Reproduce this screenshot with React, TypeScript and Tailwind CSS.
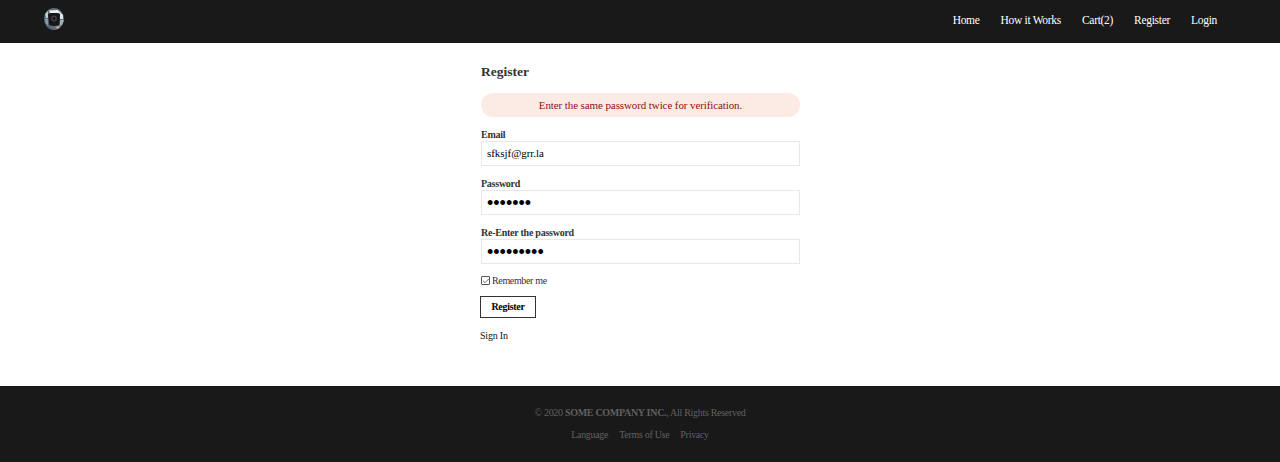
import { Check } from "lucide-react";

const navItems = ["Home", "How it Works", "Cart(2)", "Register", "Login"];

// small round product logo, scrappy mosaic like the source bitmap
const Logo = () => (
  <svg width="20" height="22" viewBox="0 0 20 22" aria-label="logo" className="mb-[5px]">
    <ellipse cx="10" cy="11" rx="10" ry="11" fill="#5f6e78" />
    <path d="M1 6 L4 3 L4 10 L2 10 Z" fill="#b8ccd6" />
    <path d="M1 11 L4 11 L4 17 L2 16 Z" fill="#7f9fb3" />
    <path d="M15 3 L19 7 L19 11 L16 11 Z" fill="#dfe6e9" />
    <path d="M16 12 L20 12 L18 17 L15 18 Z" fill="#9fb0b8" />
    <path d="M3 17 L7 20 L11 22 L5 20 Z" fill="#35617f" />
    <path d="M11 19 L16 18 L14 21 Z" fill="#c8b090" />
    <path d="M4 6 Q10 3 16 6 L15.5 17 Q10 19 5 17 Z" fill="#17171a" />
    <path d="M5 2.5 L14 2 L16 5 L6 5 Z" fill="#eef1f2" />
    <circle cx="10" cy="10.5" r="3" fill="#383d42" />
    <circle cx="10" cy="10.5" r="1.2" fill="#0a0a0a" />
  </svg>
);

const Field = ({ label, type, value }: { label: string; type: string; value: string }) => (
  <div className="mb-[12px]">
    <label className="block text-[10px] font-bold leading-[12px] tracking-[-0.25px] text-[#333]">{label}</label>
    <input
      readOnly
      type={type}
      value={value}
      className={
        type === "password"
          ? "block h-[25px] w-full border border-[#e8e8e8] bg-white px-[5px] pt-[2px] font-['Liberation_Sans',sans-serif] text-[18px] text-black outline-none"
          : "block h-[25px] w-full border border-[#e8e8e8] bg-white px-[5px] text-[11px] tracking-[-0.05px] text-black outline-none"
      }
    />
  </div>
);

export default function App() {
  return (
    <div className="flex min-h-[462px] flex-col bg-white font-['Liberation_Serif',serif]">
      <header className="flex h-[43px] items-center justify-between bg-[#191919] pl-[44px] pr-[63px]">
        <Logo />
        <nav className="flex gap-[21px] pb-[2px] text-[11.5px] tracking-[-0.3px] text-white">
          {navItems.map((item) => (
            <a key={item}>{item}</a>
          ))}
        </nav>
      </header>

      <main className="mx-auto flex h-[343px] w-[320px] flex-col pt-[21px]">
        <div className="pl-[1px]">
          <h1 className="text-[13.5px] font-bold leading-[16px] text-[#333]">Register</h1>
          <div className="mt-[13px] mb-[12px] flex h-[23.5px] items-center justify-center rounded-full bg-[#fcebe5] text-[11px] tracking-[-0.1px] text-[#8f1010]">
            Enter the same password twice for verification.
          </div>
          <Field label="Email" type="text" value="sfksjf@grr.la" />
          <Field label="Password" type="password" value="1234567" />
          <Field label="Re-Enter the password" type="password" value="123456789" />
          <label className="-mt-[1px] flex h-[12px] items-center gap-[2px] text-[10px] tracking-[-0.35px] text-[#333]">
            <span className="mb-[1px] grid h-[9px] w-[9px] place-items-center rounded-[1px] border border-[#555]">
              <Check className="h-[8px] w-[8px] text-[#333]" strokeWidth={2.25} />
            </span>
            Remember me
          </label>
        </div>
        <button className="mt-[9px] h-[22.5px] w-[56px] border border-[#333] bg-white text-[10px] font-bold tracking-[-0.3px] text-black">
          Register
        </button>
        <a className="mt-[11.5px] text-[10px] leading-[12px] tracking-[-0.2px] text-[#111]">Sign In</a>
      </main>

      <footer className="flex h-[76px] flex-col items-center bg-[#191919] pt-[21px] text-[10px] tracking-[-0.3px] text-[#606060]">
        <p className="leading-[12px]">
          © 2020 <strong className="font-bold">SOME COMPANY INC.</strong>, All Rights Reserved
        </p>
        <div className="mt-[10px] flex gap-[11px] leading-[12px]">
          <a>Language</a>
          <a>Terms of Use</a>
          <a>Privacy</a>
        </div>
      </footer>
    </div>
  );
}
